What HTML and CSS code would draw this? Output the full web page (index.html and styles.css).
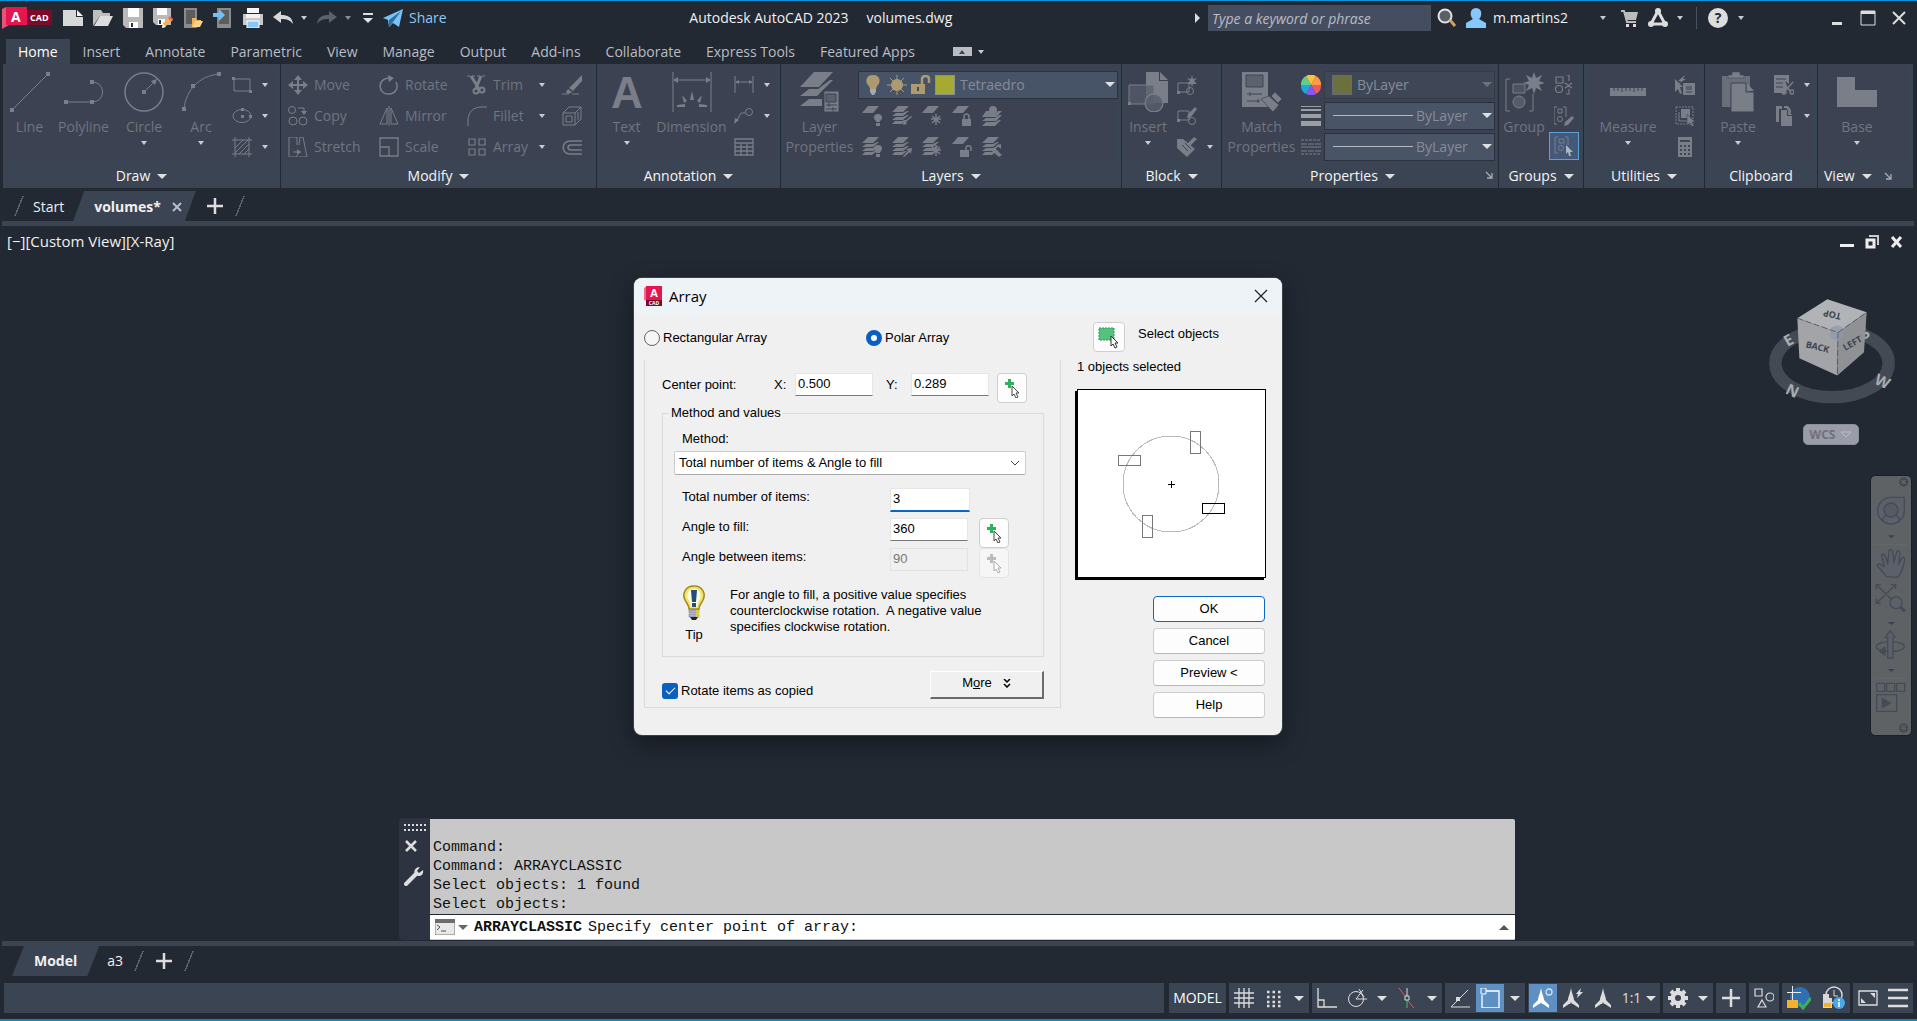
FILE: index.html
```html
<!DOCTYPE html>
<html lang="en">
<head>
<meta charset="utf-8">
<title>Autodesk AutoCAD 2023 - volumes.dwg</title>
<link rel="stylesheet" href="styles.css">
</head>
<body>
<svg class="sprite" aria-hidden="true">
  <!-- quick access -->
  <symbol id="new" viewBox="0 0 20 20"><path d="M0 2h13v7h7v9H0z" fill="#d8d8d8"/><path d="M14 2l6 6h-6z" fill="#f4f4f4"/></symbol>
  <symbol id="open" viewBox="0 0 20 20"><path d="M0 18V2h8l2 3h7v3H7z" fill="#bdbdbd"/><path d="M1 18L7 8h13l-5 10z" fill="#dcdcdc"/></symbol>
  <symbol id="save" viewBox="0 0 20 20"><path d="M0 0h20v20H3l-3-3z" fill="#b9b9b9"/><path d="M5 0h11v9H5zM6 14h9v6H6z" fill="#fff"/><path d="M8 15h2v4H8z" fill="#333"/></symbol>
  <symbol id="saveas" viewBox="0 0 20 20"><path d="M0 0h18v17H3l-3-3z" fill="#b9b9b9"/><path d="M4 0h10v7H4zM5 11h7v6H5z" fill="#fff"/><path d="M6 12h2v4H6z" fill="#333"/><path d="M9 20l1-5 7-6 3 3-7 6z" fill="#f1b355"/><path d="M15 10l2-2 3 3-2 2z" fill="#f4655a"/><path d="M9 20l1-4 3 3z" fill="#fff"/></symbol>
  <symbol id="openweb" viewBox="0 0 20 20"><path d="M1 0h13v20H1z" fill="#8b8b8b"/><path d="M3 2h9v14H3z" fill="#5d5d5d"/><path d="M9 19v-9h4l1 2h4v2h-5z" fill="#f1b355"/><path d="M9 19l3-6h8l-3 6z" fill="#fbd38a"/></symbol>
  <symbol id="saveweb" viewBox="0 0 20 20"><path d="M4 0h14v20H4z" fill="#8b8b8b"/><path d="M6 2h10v14H6z" fill="#5d5d5d"/><path d="M0 5h6V1l6 6-6 6V9H0z" fill="#6fc0fb"/></symbol>
  <symbol id="print" viewBox="0 0 20 20"><path d="M4 0h12v5H4z" fill="#f5f5f5"/><path d="M0 6h20v11H0z" fill="#c9c9c9"/><path d="M3 6h14v4H3z" fill="#f2f2f2"/><path d="M4 13h12v7H4z" fill="#86c8fb" stroke="#fff"/></symbol>
  <symbol id="undo" viewBox="0 0 20 20"><path d="M0 9l8-6v4c7 0 11 2 12 9-3-4-6-5-12-5v4z" fill="currentColor"/></symbol>
  <symbol id="redo" viewBox="0 0 20 20"><path d="M20 9l-8-6v4C5 7 1 9 0 16c3-4 6-5 12-5v4z" fill="currentColor"/></symbol>
  <symbol id="plane" viewBox="0 0 20 20"><path d="M0 10L20 1l-4 18-6-4-4 4-1-7z" fill="#79c3f6"/><path d="M6 12L18 3l-8 11-4 5z" fill="#2c6fa3"/></symbol>
  <symbol id="search" viewBox="0 0 20 20"><circle cx="8" cy="8" r="6.500" fill="#5b6068" stroke="#e3e3e3" stroke-width="2"/><path d="M13 12l5 6" stroke="#cfa063" stroke-width="3"/></symbol>
  <symbol id="user" viewBox="0 0 20 20"><path d="M10 0c7 0 6 9 3 11l7 4v5H0v-5l7-4C4 9 3 0 10 0z" fill="#86c8fb"/></symbol>
  <symbol id="cart" viewBox="0 0 20 20"><path d="M1 3h3l3 11h9" fill="none" stroke="#bbb" stroke-width="2"/><path d="M4 4h14l-2 8H6z" fill="#bbb"/><path d="M6 16h3v3H6zM13 16h3v3h-3z" fill="#ddd"/></symbol>
  <symbol id="tri" viewBox="0 0 20 20"><path d="M10 3L3 16h14z" fill="none" stroke="#ddd" stroke-width="3"/><circle cx="10" cy="3" r="3" fill="#ddd"/><circle cx="3" cy="16" r="3" fill="#ddd"/><circle cx="17" cy="16" r="3" fill="#ddd"/></symbol>
  <!-- draw -->
  <symbol id="line" viewBox="0 0 40 40"><path d="M2 38L38 2" stroke="currentColor"/><path d="M0 36h4v4H0zM36 0h4v4h-4z" fill="currentColor"/></symbol>
  <symbol id="poly" viewBox="0 0 40 40"><path d="M2 30h26c14 0 14-20 0-20" fill="none" stroke="currentColor"/><path d="M0 28h4v4H0zM26 28h4v4h-4zM26 8h4v4h-4z" fill="currentColor"/></symbol>
  <symbol id="circle" viewBox="0 0 40 40"><circle cx="20" cy="20" r="19" fill="none" stroke="currentColor" stroke-width="1.500"/><path d="M20 20L31 9" stroke="currentColor"/><path d="M18 18h4v4h-4zM33 7l-2 6-4-4z" fill="currentColor"/></symbol>
  <symbol id="arc" viewBox="0 0 40 40"><path d="M3 37C5 18 18 4 38 2" fill="none" stroke="currentColor"/><path d="M1 35h4v4H1zM10 12h4v4h-4zM36 0h4v4h-4z" fill="currentColor"/></symbol>
  <symbol id="rect" viewBox="0 0 20 20"><path d="M2 4h16v12H2z" fill="none" stroke="currentColor"/><path d="M0 2h3v3H0zM17 15h3v3h-3z" fill="currentColor"/></symbol>
  <symbol id="ell" viewBox="0 0 20 20"><ellipse cx="10" cy="10" rx="9" ry="6.500" fill="none" stroke="currentColor"/><path d="M9 9h3v3H9zM9 2h3v3H9zM17 9h3v3h-3z" fill="currentColor"/></symbol>
  <symbol id="hatch" viewBox="0 0 20 20"><path d="M3 0v20M17 0v20M0 3h20M0 17h20M3 11l8-8M3 16L16 3M7 17L17 7M12 17l5-5" stroke="currentColor" fill="none"/></symbol>
  <!-- modify -->
  <symbol id="move" viewBox="0 0 20 20"><path d="M10 2v16M2 10h16" stroke="currentColor" stroke-width="2"/><path d="M10 0l4 5H6zM10 20l4-5H6zM0 10l5-4v8zM20 10l-5-4v8z" fill="currentColor"/></symbol>
  <symbol id="copy" viewBox="0 0 20 20"><g fill="none" stroke="currentColor"><circle cx="4" cy="4" r="3.500"/><circle cx="5" cy="15" r="4"/><circle cx="15" cy="15" r="4"/><path d="M10 2h6v5"/></g><path d="M13 5h6l-3 4z" fill="currentColor"/></symbol>
  <symbol id="stretch" viewBox="0 0 20 20"><path d="M9 8V0H1v20h8v-2M11 8l1-8h3l4 20h-8M5 15h8" fill="none" stroke="currentColor"/><path d="M9 12l4 3-4 3z" fill="currentColor"/></symbol>
  <symbol id="rotate" viewBox="0 0 20 20"><path d="M11 3C-3 3-1 20 10 19c6 0 10-6 7-12" fill="none" stroke="currentColor" stroke-width="1.500"/><path d="M9 0l6 3-5 4z" fill="currentColor"/></symbol>
  <symbol id="mirror" viewBox="0 0 20 20"><path d="M8 2v16H1zM12 2v16h7zM10 0v20" fill="none" stroke="currentColor"/></symbol>
  <symbol id="scale" viewBox="0 0 20 20"><path d="M1 1h18v18H1zM1 10h9v9" fill="none" stroke="currentColor" stroke-width="1.300"/></symbol>
  <symbol id="trim" viewBox="0 0 20 20"><path d="M0 1h20" stroke="currentColor" stroke-dasharray="3 2"/><path d="M4 1l8 13M14 1L9 13" stroke="currentColor" stroke-width="3"/><circle cx="9" cy="16" r="2.500" fill="none" stroke="currentColor" stroke-width="2"/><circle cx="15" cy="15" r="2.500" fill="none" stroke="currentColor" stroke-width="2"/></symbol>
  <symbol id="fillet" viewBox="0 0 20 20"><path d="M1 20v-5C1 6 6 1 15 1h5" fill="none" stroke="currentColor"/></symbol>
  <symbol id="array" viewBox="0 0 20 20"><path d="M2 2h6v6H2zM12 2h6v6h-6zM2 12h6v6H2zM12 12h6v6h-6z" fill="none" stroke="currentColor" stroke-width="1.200"/></symbol>
  <symbol id="erase" viewBox="0 0 20 20"><path d="M20 0v6l-9 10-4-3zM6 14l4 3c-2 2-5 2-6 0z" fill="currentColor"/><path d="M0 19h20" stroke="currentColor" stroke-dasharray="7 3"/></symbol>
  <symbol id="box" viewBox="0 0 20 20"><path d="M1 7h12v12H1zM1 7l6-6h12v12l-6 6M13 7l6-6M4 10h6v6H4zM16 6v8" fill="none" stroke="currentColor"/></symbol>
  <symbol id="offset" viewBox="0 0 20 20"><path d="M20 4H8c-9 0-9 13 0 13h12M20 8H9c-4 0-4 5 0 5h11" fill="none" stroke="currentColor" stroke-width="1.500"/></symbol>
  <!-- annotation -->
  <symbol id="dim" viewBox="0 0 40 40"><path d="M1 0v40M39 0v40M2 8h36" stroke="currentColor"/><path d="M1 8l5-3v6zM39 8l-5-3v6zM20 19l2 9h-4zM10 23l5 6-3 2zM30 23l-5 6 3 2zM5 33l8-1v3H5zM35 33l-8-1v3h8z" fill="currentColor"/></symbol>
  <symbol id="dimlin" viewBox="0 0 20 20"><path d="M1 1v17M19 1v17M2 7h16" stroke="currentColor"/><path d="M1 7l4-2v4zM19 7l-4-2v4z" fill="currentColor"/></symbol>
  <symbol id="leader" viewBox="0 0 20 20"><path d="M2 16l5-9h4" fill="none" stroke="currentColor"/><circle cx="15" cy="6" r="3.500" fill="none" stroke="currentColor"/><path d="M0 18l1-6 4 2z" fill="currentColor"/></symbol>
  <symbol id="table" viewBox="0 0 20 20"><path d="M1 2h18v16H1zM1 6h18M1 10h18M1 14h18M7 6v12M13 6v12" fill="none" stroke="currentColor" stroke-width="1.300"/></symbol>
  <!-- layers -->
  <symbol id="layerprops" viewBox="0 0 40 40"><path d="M14 0h19L19 15H0zM9 17l-9 7h17l16-16-3 0-12 9zM9 27l-9 7h22v-7z" fill="currentColor"/><path d="M24 19h15v21H24z" fill="currentColor" stroke="#3b4252"/><path d="M26 22h10v8H26zM26 33h11M26 37h11M29 31v4M33 35v4" fill="#5a606c" stroke="#3b4252"/></symbol>
  <symbol id="sheet" viewBox="0 0 20 20"><path d="M6 0h11l-6 7H0z" fill="currentColor"/></symbol>
  <symbol id="stack" viewBox="0 0 20 20"><path d="M6 0h11l-6 6H0zM4 7l-4 3h11l6-5-2 0-4 2zM4 11l-4 3h11l6-5h-2l-4 2zM3 15l-3 3h10l5-4h-2l-3 1z" fill="currentColor"/></symbol>
  <symbol id="badge-bulb" viewBox="0 0 20 20"><path d="M16 8c5 0 5 5 2 7v1h-4v-1c-3-2-3-7 2-7zM14 17h4v3h-4z" fill="currentColor"/></symbol>
  <symbol id="badge-in" viewBox="0 0 20 20"><path d="M11 19l1-5 1 1 6-5 1 1-6 5 1 2z" fill="currentColor"/></symbol>
  <symbol id="badge-out" viewBox="0 0 20 20"><path d="M20 11l-1 6-1-2-6 5-1-1 5-5-2-2z" fill="currentColor"/></symbol>
  <symbol id="badge-star" viewBox="0 0 20 20"><path d="M14 8v11M9 13h10M10 10l8 7M18 10l-8 7" stroke="currentColor" stroke-width="1.500"/></symbol>
  <symbol id="badge-lock" viewBox="0 0 20 20"><path d="M10 13h9v7h-9z" fill="currentColor"/><path d="M12 13v-2c0-4 5-4 5 0v2" fill="none" stroke="currentColor" stroke-width="1.500"/></symbol>
  <symbol id="badge-unlock" viewBox="0 0 20 20"><path d="M8 13h9v7H8z" fill="currentColor"/><path d="M14 13v-2c0-3 5-3 5 0v3" fill="none" stroke="currentColor" stroke-width="1.500"/></symbol>
  <symbol id="badge-pen" viewBox="0 0 20 20"><path d="M9 11l4 0 7 7-3 2-7-6zM14 8l5-1v5z" fill="currentColor"/></symbol>
  <symbol id="current" viewBox="0 0 20 20"><circle cx="11" cy="4" r="4" fill="currentColor"/><path d="M4 5h3c2 4 6 4 9 0h4l-6 6H0zM4 12l-4 3h14l6-6h-3l-4 3zM4 16l-4 4h13l6-6h-2l-4 2z" fill="currentColor"/></symbol>
  <symbol id="bulb" viewBox="0 0 20 20"><path d="M10 0c8 0 8 8 4 11l-1 3H7l-1-3C2 8 2 0 10 0z" fill="#ad9a70"/><path d="M7 14h6v3l-2 3H9l-2-3z" fill="#a5a9b1"/></symbol>
  <symbol id="sun" viewBox="0 0 20 20"><circle cx="10" cy="10" r="6" fill="#ad9a70"/><path d="M10 0v20M0 10h20M3 3l14 14M17 3L3 17" stroke="#ad9a70"/></symbol>
  <symbol id="lock" viewBox="0 0 20 20"><path d="M0 9h14v10H0z" fill="#ad9a70"/><path d="M11 9V4c0-4 7-4 7 0v4" fill="none" stroke="#ad9a70" stroke-width="2.500"/><path d="M7 12v4" stroke="#4b4a43" stroke-width="2"/></symbol>
  <!-- block -->
  <symbol id="insert" viewBox="0 0 40 40"><path d="M18 0h13v9h9v22H18z" fill="currentColor"/><path d="M32 0l8 8h-8z" fill="currentColor"/><path d="M1 13h25v19H1z" fill="#575e6b" fill-opacity=".7" stroke="currentColor"/><circle cx="26" cy="31" r="9" fill="#575e6b" fill-opacity=".8" stroke="currentColor" stroke-width="1.300"/><path d="M0 30h3v3H0z" fill="currentColor"/></symbol>
  <symbol id="blocknew" viewBox="0 0 20 20"><path d="M1 8h11v9H1z" fill="none" stroke="currentColor"/><circle cx="13" cy="16" r="3.500" fill="none" stroke="currentColor"/><path d="M0 16h3v3H0zM15 0l1 4 4-1-3 3 3 3-4 0-1 3-1-3-4 0 3-3-3-3 4 1z" fill="currentColor"/></symbol>
  <symbol id="blockedit" viewBox="0 0 20 20"><path d="M1 5h11v9H1z" fill="none" stroke="currentColor"/><circle cx="15" cy="15" r="3.500" fill="none" stroke="currentColor"/><path d="M0 13h3v3H0zM10 12l1-4 7-7 2 2-6 8z" fill="currentColor"/></symbol>
  <symbol id="attr" viewBox="0 0 20 20"><path d="M0 2h6l12 10-8 8L0 11zM9 8l8-8 3 2-8 8z" fill="currentColor"/><path d="M5 8l6 6M8 6l6 6" stroke="#3b4252"/></symbol>
  <!-- properties -->
  <symbol id="match" viewBox="0 0 40 40"><path d="M0 0h26v35H0z" fill="currentColor"/><path d="M4 3h17v12H4zM5 22h15M5 29h13M8 20v4M16 27v4" fill="#5c636f" stroke="#3f4655"/><path d="M19 27l8-3 10 9-6 7zM29 24l4-4 7 7-4 4z" fill="currentColor" stroke="#3b4252" stroke-width=".7"/></symbol>
  <symbol id="wheel" viewBox="0 0 20 20"><path d="M10 10L5 1a10 10 0 0 1 10 0z" fill="#ffc23c"/><path d="M10 10L15 1a10 10 0 0 1 5 9z" fill="#ff9a45"/><path d="M10 10h10a10 10 0 0 1-5 9z" fill="#ec5a5f"/><path d="M10 10l5 9a10 10 0 0 1-10 0z" fill="#8b55f5"/><path d="M10 10L5 19a10 10 0 0 1-5-9z" fill="#1fa9d6"/><path d="M10 10H0a10 10 0 0 1 5-9z" fill="#5fd08c"/></symbol>
  <symbol id="lweight" viewBox="0 0 20 20"><path d="M0 0h20v1H0zM0 3h20v2H0zM0 8h20v4H0zM0 15h20v5H0z" fill="#9a9ea5"/></symbol>
  <symbol id="ltype" viewBox="0 0 20 20"><path d="M0 3h20M0 17h20" stroke="currentColor" stroke-dasharray="3 1"/><path d="M0 7h20M0 14h20" stroke="currentColor" stroke-dasharray="6 1"/><path d="M0 10h20" stroke="currentColor"/></symbol>
  <symbol id="launch" viewBox="0 0 8 8"><path d="M1 1l5 5M7 2v5H2" fill="none" stroke="#a9adb5" stroke-width="1.300"/></symbol>
  <!-- groups -->
  <symbol id="group" viewBox="0 0 40 40"><path d="M6 7H2v32h4M25 39h4V22" fill="none" stroke="currentColor"/><path d="M9 12h12v9H9z" fill="#4c5361" stroke="currentColor"/><circle cx="15" cy="30" r="6" fill="#565d6a" stroke="currentColor"/><path d="M30 0l2 6 6-3-3 6 6 2-6 2 3 6-6-3-2 6-2-6-6 3 3-6-6-2 6-2-3-6 6 3z" fill="currentColor"/></symbol>
  <symbol id="ungroup" viewBox="0 0 20 20"><path d="M2 2h7v6H2zM12 0h3v6M12 19h3v-5M11 8l7 5M18 8l-7 5" fill="none" stroke="currentColor" stroke-width="1.200"/><circle cx="5" cy="14" r="3.500" fill="none" stroke="currentColor" stroke-width="1.200"/></symbol>
  <symbol id="grpedit" viewBox="0 0 20 20"><path d="M3 1H0v17h3M9 1h3v10M4 3h4v4H4z" fill="none" stroke="currentColor"/><circle cx="6" cy="13" r="2.500" fill="none" stroke="currentColor"/><path d="M10 20l1-4 7-6 2 2-6 7z" fill="currentColor"/></symbol>
  <symbol id="grpsel" viewBox="0 0 20 20"><path d="M4 1H1v16h3M11 1h3v8M5 3h5v4H5z" fill="none" stroke="currentColor"/><circle cx="7" cy="12" r="2.500" fill="none" stroke="currentColor"/><path d="M12 9l7 7h-3l1 4h-2l-1-4-2 2z" fill="#aeb6c0"/></symbol>
  <!-- utilities, clipboard, view -->
  <symbol id="measure" viewBox="0 0 40 40"><path d="M2 16h36v8H2z" fill="currentColor"/><path d="M6 16v3M10 16v3M14 16v4M18 16v3M22 16v3M26 16v4M30 16v3M34 16v3" stroke="#3b4252"/></symbol>
  <symbol id="qsel" viewBox="0 0 20 20"><path d="M8 8h12v12H8z" fill="currentColor"/><path d="M0 4l8 8H5l2 6-2 1-2-5-3 3zM10 0L3 6h3L3 9l8-5H8z" fill="currentColor"/><path d="M11 12h6M11 14h6M11 17h6" stroke="#3b4252"/></symbol>
  <symbol id="selall" viewBox="0 0 20 20"><path d="M1 1h17v17H1z" fill="none" stroke="currentColor" stroke-dasharray="2 1"/><path d="M6 3h9v9H6z" fill="currentColor"/><path d="M4 6v9h9" fill="none" stroke="currentColor"/><path d="M12 8l8 8h-3l2 4-2 1-2-4-3 2z" fill="currentColor" stroke="#3b4252" stroke-width=".5"/></symbol>
  <symbol id="calc" viewBox="0 0 20 20"><path d="M3 0h14v20H3z" fill="currentColor"/><path d="M5 3h10v2H5zM5 8h2v2H5zM9 8h2v2H9zM13 8h2v2h-2zM5 12h2v2H5zM9 12h2v2H9zM13 12h2v2h-2zM5 16h2v2H5zM9 16h2v2H9zM13 16h2v2h-2z" fill="#3f4654"/></symbol>
  <symbol id="paste" viewBox="0 0 40 40"><path d="M4 4h28v31H4z" fill="currentColor" opacity=".75"/><path d="M14 0h8v3h4v3H10V3h4z" fill="currentColor" stroke="#3b4252" stroke-width=".5"/><path d="M13 11h15v9h8v20H13z" fill="currentColor" stroke="#3b4252"/><path d="M29 11l7 8h-7z" fill="currentColor"/></symbol>
  <symbol id="cut" viewBox="0 0 20 20"><path d="M0 0h15v9l-4-3 2 5-2 7H0z" fill="currentColor"/><path d="M2 4h10M2 8h7M2 12h7" stroke="#3b4252"/><path d="M9 7l7 9M19 7l-8 9" stroke="currentColor" stroke-width="1.500"/><circle cx="10" cy="17" r="2" fill="none" stroke="currentColor" stroke-width="1.500"/><circle cx="18" cy="17" r="2" fill="none" stroke="currentColor" stroke-width="1.500"/></symbol>
  <symbol id="clip" viewBox="0 0 20 20"><path d="M2 0h6v3H5v13H2z" fill="currentColor"/><path d="M7 4h6v6h5v10H7z" fill="currentColor"/><path d="M10 0h4l3 4v3l-5-5h-2zM14 4l4 5h-4z" fill="currentColor"/></symbol>
  <symbol id="base" viewBox="0 0 40 40"><path d="M0 5h18v13h22v17H0z" fill="currentColor"/></symbol>
  <!-- dialog -->
  <symbol id="pick" viewBox="0 0 20 20"><path d="M6 1h3v3h3v3H9v3H6V7H3V4h3z" fill="var(--plus,#2cb35a)"/><path d="M10 8v10l2-2 2 4 2-1-2-4h3z" fill="#fff" stroke="var(--cur,#444)"/></symbol>
  <!-- status -->
  <symbol id="s-grid" viewBox="0 0 20 20"><path d="M5 0v20M10 0v20M15 0v20M0 5h20M0 10h20M0 15h20" stroke="currentColor" stroke-width="1.300"/></symbol>
  <symbol id="s-dots" viewBox="0 0 20 20"><path d="M3 4h14M3 9h14M3 14h14M3 18h14" stroke="currentColor" stroke-width="2.500" stroke-dasharray="2.500 3"/></symbol>
  <symbol id="s-ortho" viewBox="0 0 20 20"><path d="M1 0v19h19M1 12h6v7" fill="none" stroke="currentColor" stroke-width="1.300"/></symbol>
  <symbol id="s-polar" viewBox="0 0 20 20"><circle cx="9" cy="11" r="7.500" fill="none" stroke="currentColor"/><path d="M9 11h11M9 11l7-9M12 1l5 8" stroke="currentColor" fill="none"/></symbol>
  <symbol id="s-iso" viewBox="0 0 20 20"><path d="M2 0l6 8M11 13l6 7" stroke="#e0565b"/><path d="M10 0v8" stroke="#ddd"/><path d="M10 12v8" stroke="#43c06a"/><path d="M8 8h4v4H8z" fill="none" stroke="#ddd"/></symbol>
  <symbol id="s-angle" viewBox="0 0 20 20"><path d="M20 19H1L18 2" fill="none" stroke="currentColor"/><path d="M6 9h4v4H6z" fill="currentColor"/></symbol>
  <symbol id="s-osnap" viewBox="0 0 20 20"><path d="M6 3h13v17H2V7" fill="none" stroke="currentColor" stroke-width="1.300"/><path d="M1 0h5v6H1z" fill="none" stroke="currentColor"/></symbol>
  <symbol id="s-ann" viewBox="0 0 20 20"><path d="M10 0c1 6 3 9 3 12l5 5v3l-6-4h-1l-1-2-1 2H8l-6 4v-3l5-5c0-3 2-6 3-12z" fill="currentColor"/></symbol>
  <symbol id="s-gear" viewBox="0 0 20 20"><path d="M10 0v20M0 10h20M3 3l14 14M17 3L3 17" stroke="currentColor" stroke-width="4"/><circle cx="10" cy="10" r="5.500" fill="none" stroke="currentColor" stroke-width="4"/><circle cx="10" cy="10" r="3" fill="#3b4453"/></symbol>
  <symbol id="s-plus" viewBox="0 0 20 20"><path d="M10 1v18M1 10h18" stroke="currentColor" stroke-width="2.500"/></symbol>
  <symbol id="s-iso2" viewBox="0 0 20 20"><path d="M1 1h7v7H1zM8 12l4 7H4z" fill="none" stroke="currentColor" stroke-width="1.200"/><circle cx="16" cy="9" r="4" fill="none" stroke="currentColor" stroke-width="1.200"/></symbol>
  <symbol id="s-globe" viewBox="0 0 24 24"><circle cx="13" cy="11" r="10" fill="#2f6fb5"/><path d="M0 6h14v1H0zM5 0h1v14H5z" fill="#e8eef5"/><path d="M0 14h11v8H0z" fill="#f3b229"/><path d="M12 17l4 5 8-10" fill="none" stroke="#3fae5a" stroke-width="3"/></symbol>
  <symbol id="s-hist" viewBox="0 0 24 24"><circle cx="13" cy="9" r="8" fill="none" stroke="#d8d8d8" stroke-width="1.500"/><path d="M13 4v6h4" stroke="#d8d8d8" fill="none"/><path d="M2 8h6v4H2zM2 12h9v10H2z" fill="#d8d8d8"/><path d="M3 17h7v4H3z" fill="#f3b229"/><circle cx="18" cy="17" r="6" fill="#4aa8e8"/><path d="M18 13v2M18 16v5" stroke="#fff" stroke-width="1.500"/></symbol>
  <symbol id="s-full" viewBox="0 0 20 20"><path d="M1 3h18v14H1z" fill="none" stroke="currentColor" stroke-width="1.300"/><path d="M12 5h5v5zM3 10l5 5H3z" fill="currentColor"/></symbol>
  <symbol id="s-menu" viewBox="0 0 20 20"><path d="M0 2h20M0 10h20M0 18h20" stroke="currentColor" stroke-width="2.500"/></symbol>
</svg>

<header class="titlebar">
  <div class="quick">
    <svg class="logo" viewBox="0 0 50 22" role="img" aria-label="AutoCAD"><path d="M0 2l4-2h3v18l-7 4z" fill="#e5557a"/><path d="M4 0h21v18H4z" fill="#e31650"/><path d="M25 3h25v15H25z" fill="#7c0a2a"/><text x="9" y="15" class="logo-a">A</text><text x="28" y="14" class="logo-cad">CAD</text></svg>
    <button title="New"><svg class="i20"><use href="#new"/></svg></button>
    <button title="Open"><svg class="i20"><use href="#open"/></svg></button>
    <button title="Save"><svg class="i20"><use href="#save"/></svg></button>
    <button title="Save As"><svg class="i20"><use href="#saveas"/></svg></button>
    <button title="Open from Web"><svg class="i20"><use href="#openweb"/></svg></button>
    <button title="Save to Web"><svg class="i20"><use href="#saveweb"/></svg></button>
    <button title="Plot"><svg class="i20"><use href="#print"/></svg></button>
    <button class="lit" title="Undo"><svg class="i20"><use href="#undo"/></svg></button>
    <button class="drop" title="Undo list"><i class="dn"></i></button>
    <button class="dim" title="Redo"><svg class="i20"><use href="#redo"/></svg></button>
    <button class="drop dim" title="Redo list"><i class="dn"></i></button>
    <button class="more-qa" title="Customize"><i class="dn wide"></i></button>
    <button class="share"><svg class="i20"><use href="#plane"/></svg>Share</button>
  </div>
  <h1><span>Autodesk AutoCAD 2023</span><span>volumes.dwg</span></h1>
  <div class="account">
    <i class="rt"></i>
    <input type="text" class="find" placeholder="Type a keyword or phrase" aria-label="Search">
    <button title="Search"><svg class="i20"><use href="#search"/></svg></button>
    <button class="who"><svg class="i20"><use href="#user"/></svg><span>m.martins2</span><i class="dn"></i></button>
    <button title="App store"><svg class="i20"><use href="#cart"/></svg></button>
    <button class="app" title="Autodesk app"><svg class="i20"><use href="#tri"/></svg><i class="dn"></i></button>
    <button class="help" title="Help"><b>?</b><i class="dn"></i></button>
    <button class="win" title="Minimize"><svg class="i14" viewBox="0 0 14 14"><path d="M2 11h10v3H2z" fill="#ddd"/></svg></button>
    <button class="win" title="Maximize"><svg class="i14" viewBox="0 0 14 14"><path d="M0 0h14v14H0z" fill="none" stroke="#ddd"/><path d="M0 0h14v3H0z" fill="#ddd"/></svg></button>
    <button class="win" title="Close"><svg class="i14" viewBox="0 0 14 14"><path d="M1 1l12 12M13 1L1 13" stroke="#ddd" stroke-width="2"/></svg></button>
  </div>
</header>

<nav class="tabs" aria-label="Ribbon tabs">
  <a href="#home" class="on">Home</a><a href="#insert-tab">Insert</a><a href="#annotate">Annotate</a><a href="#parametric">Parametric</a><a href="#view">View</a><a href="#manage">Manage</a><a href="#output">Output</a><a href="#addins">Add-ins</a><a href="#collaborate">Collaborate</a><a href="#express">Express Tools</a><a href="#featured">Featured Apps</a>
  <button class="minrib" title="Minimize ribbon"><span><i class="up"></i></span><i class="dn"></i></button>
</nav>

<main class="ribbon" id="home">
  <section class="panel">
    <div class="tools draw">
      <button class="big"><svg class="i40"><use href="#line"/></svg>Line</button>
      <button class="big"><svg class="i40"><use href="#poly"/></svg>Polyline</button>
      <button class="big"><svg class="i40"><use href="#circle"/></svg>Circle<i class="dn"></i></button>
      <button class="big"><svg class="i40"><use href="#arc"/></svg>Arc<i class="dn"></i></button>
      <div class="col">
        <button title="Rectangle"><svg class="i20"><use href="#rect"/></svg><i class="dn"></i></button>
        <button title="Ellipse"><svg class="i20"><use href="#ell"/></svg><i class="dn"></i></button>
        <button title="Hatch"><svg class="i20"><use href="#hatch"/></svg><i class="dn"></i></button>
      </div>
    </div>
    <h2>Draw <i class="dn wide"></i></h2>
  </section>
  <section class="panel">
    <div class="tools modify">
      <div class="col">
        <button><svg class="i20"><use href="#move"/></svg>Move</button>
        <button><svg class="i20"><use href="#copy"/></svg>Copy</button>
        <button><svg class="i20"><use href="#stretch"/></svg>Stretch</button>
      </div>
      <div class="col">
        <button><svg class="i20"><use href="#rotate"/></svg>Rotate</button>
        <button><svg class="i20"><use href="#mirror"/></svg>Mirror</button>
        <button><svg class="i20"><use href="#scale"/></svg>Scale</button>
      </div>
      <div class="col lists">
        <button><svg class="i20"><use href="#trim"/></svg><span>Trim</span><i class="dn"></i></button>
        <button><svg class="i20"><use href="#fillet"/></svg><span>Fillet</span><i class="dn"></i></button>
        <button><svg class="i20"><use href="#array"/></svg><span>Array</span><i class="dn"></i></button>
      </div>
      <div class="col">
        <button title="Erase"><svg class="i20"><use href="#erase"/></svg></button>
        <button title="Explode"><svg class="i20"><use href="#box"/></svg></button>
        <button title="Offset"><svg class="i20"><use href="#offset"/></svg></button>
      </div>
    </div>
    <h2>Modify <i class="dn wide"></i></h2>
  </section>
  <section class="panel">
    <div class="tools annot">
      <button class="big"><svg class="i40 open" viewBox="0 0 40 40"><text x="20" y="36" text-anchor="middle" class="glyph-a">A</text></svg>Text<i class="dn"></i></button>
      <button class="big"><svg class="i40"><use href="#dim"/></svg>Dimension</button>
      <div class="col">
        <button title="Linear"><svg class="i20"><use href="#dimlin"/></svg><i class="dn"></i></button>
        <button title="Leader"><svg class="i20"><use href="#leader"/></svg><i class="dn"></i></button>
        <button title="Table"><svg class="i20"><use href="#table"/></svg></button>
      </div>
    </div>
    <h2>Annotation <i class="dn wide"></i></h2>
  </section>
  <section class="panel">
    <div class="tools layers">
      <button class="big"><svg class="i40"><use href="#layerprops"/></svg>Layer<br>Properties</button>
      <div class="rows">
        <div class="combo"><svg class="i20"><use href="#bulb"/></svg><svg class="i20"><use href="#sun"/></svg><svg class="i20"><use href="#lock"/></svg><i class="swatch"></i><select aria-label="Layer"><option>Tetraedro</option></select><i class="dn wide"></i></div>
        <div class="strip">
          <button title="Off"><svg class="i20"><use href="#sheet"/><use href="#badge-bulb"/></svg></button>
          <button title="Isolate"><svg class="i20"><use href="#stack"/><use href="#badge-in"/></svg></button>
          <button title="Freeze"><svg class="i20"><use href="#sheet"/><use href="#badge-star"/></svg></button>
          <button title="Lock"><svg class="i20"><use href="#sheet"/><use href="#badge-lock"/></svg></button>
          <button title="Make Current"><svg class="i20"><use href="#current"/></svg></button>
        </div>
        <div class="strip">
          <button title="Turn All On"><svg class="i20"><use href="#stack"/><use href="#badge-bulb"/></svg></button>
          <button title="Unisolate"><svg class="i20"><use href="#stack"/><use href="#badge-out"/></svg></button>
          <button title="Thaw All"><svg class="i20"><use href="#stack"/><use href="#badge-star"/></svg></button>
          <button title="Unlock"><svg class="i20"><use href="#sheet"/><use href="#badge-unlock"/></svg></button>
          <button title="Match Layer"><svg class="i20"><use href="#stack"/><use href="#badge-pen"/></svg></button>
        </div>
      </div>
    </div>
    <h2>Layers <i class="dn wide"></i></h2>
  </section>
  <section class="panel">
    <div class="tools block">
      <button class="big"><svg class="i40"><use href="#insert"/></svg>Insert<i class="dn"></i></button>
      <div class="col">
        <button title="Create"><svg class="i20"><use href="#blocknew"/></svg></button>
        <button title="Edit"><svg class="i20"><use href="#blockedit"/></svg></button>
        <button title="Edit Attributes"><svg class="i20"><use href="#attr"/></svg><i class="dn"></i></button>
      </div>
    </div>
    <h2>Block <i class="dn wide"></i></h2>
  </section>
  <section class="panel">
    <div class="tools props">
      <button class="big"><svg class="i40"><use href="#match"/></svg>Match<br>Properties</button>
      <div class="rows">
        <div class="prop"><svg class="i20"><use href="#wheel"/></svg><div class="combo flat"><i class="swatch dull"></i><select aria-label="Color"><option>ByLayer</option></select><i class="dn wide"></i></div></div>
        <div class="prop"><svg class="i20"><use href="#lweight"/></svg><div class="combo"><i class="rule"></i><select aria-label="Lineweight"><option>ByLayer</option></select><i class="dn wide"></i></div></div>
        <div class="prop"><svg class="i20"><use href="#ltype"/></svg><div class="combo"><i class="rule"></i><select aria-label="Linetype"><option>ByLayer</option></select><i class="dn wide"></i></div></div>
      </div>
    </div>
    <h2 class="with-launch">Properties <i class="dn wide"></i><svg class="launch end"><use href="#launch"/></svg></h2>
  </section>
  <section class="panel">
    <div class="tools groups">
      <button class="big"><svg class="i40"><use href="#group"/></svg>Group</button>
      <div class="col">
        <button title="Ungroup"><svg class="i20"><use href="#ungroup"/></svg></button>
        <button title="Group Edit"><svg class="i20"><use href="#grpedit"/></svg></button>
        <button class="picked" title="Group Selection"><svg class="i20"><use href="#grpsel"/></svg></button>
      </div>
    </div>
    <h2>Groups <i class="dn wide"></i></h2>
  </section>
  <section class="panel">
    <div class="tools utils">
      <button class="big"><svg class="i40"><use href="#measure"/></svg>Measure<i class="dn"></i></button>
      <div class="col">
        <button title="Quick Select"><svg class="i20"><use href="#qsel"/></svg></button>
        <button title="Select All"><svg class="i20"><use href="#selall"/></svg></button>
        <button title="Calculator"><svg class="i20"><use href="#calc"/></svg></button>
      </div>
    </div>
    <h2>Utilities <i class="dn wide"></i></h2>
  </section>
  <section class="panel">
    <div class="tools clipb">
      <button class="big"><svg class="i40"><use href="#paste"/></svg>Paste<i class="dn"></i></button>
      <div class="col">
        <button title="Cut"><svg class="i20"><use href="#cut"/></svg><i class="dn"></i></button>
        <button title="Copy"><svg class="i20"><use href="#clip"/></svg><i class="dn"></i></button>
      </div>
    </div>
    <h2>Clipboard</h2>
  </section>
  <section class="panel">
    <div class="tools viewp">
      <button class="big"><svg class="i40"><use href="#base"/></svg>Base<i class="dn"></i></button>
    </div>
    <h2 class="start">View <i class="dn wide"></i><svg class="launch"><use href="#launch"/></svg></h2>
  </section>
</main>

<nav class="files" aria-label="Open drawings">
  <i class="slash"></i><a href="#start">Start</a>
  <a href="#volumes" class="cur"><b>volumes*</b><svg class="i10" viewBox="0 0 10 10"><path d="M1 1l8 8M9 1L1 9" stroke="#b8bdc6" stroke-width="2"/></svg></a>
  <button title="New drawing"><svg class="i16" viewBox="0 0 16 16"><path d="M8 0v16M0 8h16" stroke="#ddd" stroke-width="2.500"/></svg></button><i class="slash"></i>
</nav>

<div class="canvas">
  <p class="vp">[−][Custom View][X-Ray]</p>
  <div class="vpwin">
    <button title="Minimize"><svg class="i14" viewBox="0 0 14 14"><path d="M0 9h14v3H0z" fill="#eee"/></svg></button>
    <button title="Restore"><svg class="i14" viewBox="0 0 14 14"><path d="M4 1h9v9" fill="none" stroke="#ccc" stroke-width="2"/><path d="M2 5h7v7H2z" fill="none" stroke="#eee" stroke-width="3"/></svg></button>
    <button title="Close"><svg class="i14" viewBox="0 0 14 14"><path d="M2 2l9 10M11 2L2 12" stroke="#eee" stroke-width="3"/></svg></button>
  </div>

  <svg class="cube" viewBox="60 40 420 350" role="img" aria-label="View cube">
    <ellipse cx="276" cy="250" rx="170" ry="102" fill="none" stroke="#444a54" stroke-width="37"/>
    <text x="145" y="197" text-anchor="middle" class="compass" transform="rotate(-30 145 180)">E</text>
    <text x="374" y="176" text-anchor="middle" class="compass" transform="rotate(-30 374 160)">S</text>
    <text x="158" y="349" text-anchor="middle" class="compass" transform="rotate(25 158 332)">N</text>
    <text x="428" y="321" text-anchor="middle" class="compass" transform="rotate(25 428 304)">W</text>
    <path d="M262 58l118 39-86 61-122-43z" fill="#b1b3b6"/>
    <path d="M172 115l122 43-2 129-114-52z" fill="#a2a4a7"/>
    <path d="M380 97l-8 120-80 70 2-129z" fill="#8f9194"/>
    <path d="M272 143l20-7 16 8 0 30-14 8-22-8z" fill="#8f98aa" opacity=".7"/>
    <path d="M172 115l122 43 86-61M294 158l-2 129" fill="none" stroke="#444a52" stroke-width="2" stroke-dasharray="18 8"/>
    <text x="233" y="211" text-anchor="middle" class="face" transform="rotate(14 233 200)">BACK</text>
    <text x="337" y="200" text-anchor="middle" class="face" transform="rotate(-30 337 190)">LEFT</text>
    <text x="276" y="115" text-anchor="middle" class="face" transform="rotate(192 276 105)">TOP</text>
  </svg>
  <button class="wcs">WCS<svg viewBox="0 0 12 8" class="wtri"><path d="M1 1h10L6 6z" fill="none" stroke="#b9bcc8"/></svg></button>

  <div class="navbar" role="toolbar" aria-label="Navigation">
    <svg viewBox="0 0 120 777" class="navart">
      <g fill="none" stroke="#454b57" stroke-width="4" stroke-linejoin="round">
        <circle cx="98" cy="18" r="14" fill="#474b51" stroke="none"/><path d="M92 12l12 12M104 12L92 24" stroke="#72767b" stroke-width="3"/>
        <path d="M60 64h40v40a40 40 0 1 1-40-40z" fill="#5b606a"/><circle cx="60" cy="102" r="21" fill="#555a63"/><path d="M44 117l-12 16M76 117l12 16M40 90"/>
        <path d="M50 178h22l-11 9z" fill="#3d434d" stroke="none"/><path d="M10 206h102M10 608h102" stroke="#676c70" stroke-width="2"/>
        <path d="M46 302C36 286 24 276 18 268c2-8 10-4 22 4l-8-34c4-8 12-4 18 26l4-40c8-8 14 0 14 36l10-34c8-6 12 2 4 40l12-22c10-2 8 10 2 28-4 18-8 24-16 32z" fill="#5b606a"/>
        <path d="M18 328l54 52M72 328l-54 52M16 340v-14h14M60 326h14v14M30 382H16v-14"/><circle cx="75" cy="380" r="18" fill="#5b606a"/><path d="M88 392l14 14" stroke-width="9"/>
        <path d="M50 438h22l-11 9z" fill="#3d434d" stroke="none"/>
        <ellipse cx="58" cy="512" rx="42" ry="15"/><path d="M50 546v-62h-8l16-20 14 20h-6v62z" fill="#5b606a"/><path d="M26 526l16-12v24z" fill="#454b57"/>
        <path d="M50 579h22l-11 9z" fill="#3d434d" stroke="none"/>
        <path d="M17 622h24v24H17zM47 622h24v24H47zM77 622h24v24H77zM17 656h60v50H17z"/><path d="M34 668l24 13-24 13z" fill="#454b57"/>
        <circle cx="98" cy="756" r="14" fill="#474b51" stroke="none"/><path d="M90 750h16M92 756h12l-6 6z" stroke="#72767b" stroke-width="2"/>
      </g>
    </svg>
  </div>

  <form class="dialog" role="dialog" aria-labelledby="dlg-title">
    <div class="dlg-bar">
      <svg class="i20" viewBox="0 0 20 20"><path d="M0 2l3-2v15l-3-1z" fill="#ee6b8e"/><path d="M2 0h16v15H2z" fill="#e31650"/><path d="M2 14h16v6H2z" fill="#7c0a2a"/><text x="10" y="11" text-anchor="middle" class="mini-a">A</text><text x="10" y="19" text-anchor="middle" class="mini-cad">CAD</text></svg>
      <h3 id="dlg-title">Array</h3>
      <button type="button" title="Close"><svg class="i14" viewBox="0 0 14 14"><path d="M1 1l12 12M13 1L1 13" stroke="#222" stroke-width="1.200"/></svg></button>
    </div>
    <div class="dlg-body">
      <div class="left">
        <div class="kinds">
          <label><input type="radio" name="kind">Rectangular Array</label>
          <label><input type="radio" name="kind" checked>Polar Array</label>
        </div>
        <div class="frame">
          <div class="center">
            <span class="cp">Center point:</span>
            <label for="cx">X:</label><input type="text" id="cx" value="0.500">
            <label for="cy" class="y">Y:</label><input type="text" id="cy" value="0.289">
            <button type="button" class="pick" title="Pick center point"><svg class="i20"><use href="#pick"/></svg></button>
          </div>
          <fieldset>
            <legend>Method and values</legend>
            <label for="method" class="mlabel">Method:</label>
            <div class="msel"><select id="method"><option>Total number of items &amp; Angle to fill</option></select><svg viewBox="0 0 10 6" class="chev"><path d="M1 1l4 4 4-4" fill="none" stroke="#444"/></svg></div>
            <div class="vals">
              <label for="total">Total number of items:</label><input type="text" id="total" class="focus" value="3"><i></i>
              <label for="fill">Angle to fill:</label><input type="text" id="fill" value="360"><button type="button" class="pick" title="Pick angle"><svg class="i20"><use href="#pick"/></svg></button>
              <label for="between">Angle between items:</label><input type="text" id="between" value="90" disabled><button type="button" class="pick" disabled title="Pick angle"><svg class="i20"><use href="#pick"/></svg></button>
            </div>
            <div class="tip">
              <div class="tipmark"><svg viewBox="0 0 24 36" class="lamp"><path d="M12 1c9 0 12 8 9 14-2 4-4 5-4 9H7c0-4-2-5-4-9C0 9 3 1 12 1z" fill="#f1e373" stroke="#9c8a1b" stroke-width="1.500"/><path d="M12 4c6 0 8 6 6 10-2 3-3 5-3 8H9c0-3-1-5-3-8C4 10 6 4 12 4z" fill="#fdfbe0"/><path d="M9 5h6l-1 12h-4zM10 18h4v4h-4z" fill="#234d7c"/><path d="M7 25h10v3H7zM7 29h10v3H7z" fill="#aeb0d8" stroke="#6d6d7a" stroke-width=".5"/><path d="M14 25h3v7h-3z" fill="#d8ca50"/><path d="M8 32h8l-2 3h-4z" fill="#223"/></svg>Tip</div>
              <p>For angle to fill, a positive value specifies<br>counterclockwise rotation.&nbsp; A negative value<br>specifies clockwise rotation.</p>
            </div>
          </fieldset>
          <div class="foot">
            <label><input type="checkbox" checked>Rotate items as copied</label>
            <button type="button" class="more"><span>M<u>o</u>re</span><svg viewBox="0 0 8 9" class="dbl"><path d="M1 0l3 3 3-3M1 5l3 3 3-3" fill="none" stroke="#000" stroke-width="1.500"/></svg></button>
          </div>
        </div>
      </div>
      <div class="right">
        <div class="selobj">
          <button type="button" class="pick" aria-labelledby="so"><svg viewBox="0 0 22 20" class="selart"><path d="M1 1h15v12H1z" fill="#57c17f" stroke="#259a53" stroke-dasharray="2 1"/><path d="M13 9v10l2-2 2 4 2-1-2-4h3z" fill="#fff" stroke="#333"/></svg></button>
          <span id="so">Select objects</span>
        </div>
        <p class="count">1 objects selected</p>
        <svg class="preview" viewBox="0 0 187 187" role="img" aria-label="Array preview"><g fill="none" shape-rendering="crispEdges"><circle cx="93" cy="94" r="48" stroke="#bbb"/><path d="M40.500 65.500h22v10h-22zM112.500 41.500h10v22h-10zM64.500 125.500h10v22h-10z" stroke="#777"/><path d="M124.500 113.500h22v10h-22zM90 94.500h7M93.500 91v7" stroke="#000"/></g></svg>
        <div class="acts">
          <button type="button" class="ok">OK</button>
          <button type="button">Cancel</button>
          <button type="button">Preview &lt;</button>
          <button type="button">Help</button>
        </div>
      </div>
    </div>
  </form>

  <div class="command">
    <div class="grip">
      <svg viewBox="0 0 22 7" class="dots"><path d="M0 1h22M0 6h22" stroke="#ddd" stroke-width="2" stroke-dasharray="2 2"/></svg>
      <button title="Close"><svg class="i14" viewBox="0 0 14 14"><path d="M2 2l10 10M12 2L2 12" stroke="#ddd" stroke-width="2.500"/></svg></button>
      <button title="Customize"><svg class="i20" viewBox="0 0 20 20"><path d="M2 18L12 8" stroke="#ddd" stroke-width="4" stroke-linecap="round"/><path d="M11 9c-2-5 1-8 5-8l-3 4 2 2 4-3c1 4-2 8-8 5z" fill="#ddd"/></svg></button>
    </div>
    <div class="log">
      <pre>Command:
Command: ARRAYCLASSIC
Select objects: 1 found
Select objects:</pre>
      <div class="entry">
        <button title="Recent commands"><svg viewBox="0 0 20 16" class="term"><path d="M0 0h20v16H0z" fill="#e8e8e8" stroke="#777"/><path d="M0 0h20v4H0z" fill="#6d6d6d"/><path d="M2 6l3 2-3 3M6 12h5" fill="none" stroke="#555"/></svg><i class="dn wide"></i></button>
        <label for="cmd"><b>ARRAYCLASSIC</b><span>Specify center point of array:</span></label>
        <input type="text" id="cmd">
        <i class="up"></i>
      </div>
    </div>
  </div>
</div>

<nav class="layouts" aria-label="Layouts">
  <a href="#model" class="cur"><b>Model</b></a><a href="#a3">a3</a><i class="slash"></i>
  <button title="New layout"><svg class="i16" viewBox="0 0 16 16"><path d="M8 0v16M0 8h16" stroke="#ddd" stroke-width="2.500"/></svg></button><i class="slash"></i>
</nav>

<footer class="status">
  <div class="fill"></div>
  <div class="g"><button class="model">MODEL</button></div>
  <div class="g"><button title="Grid"><svg class="i20"><use href="#s-grid"/></svg></button><button title="Snap"><svg class="i20"><use href="#s-dots"/></svg></button><button class="arr" title="Snap options"><i class="dn wide"></i></button></div>
  <div class="g"><button title="Ortho"><svg class="i20"><use href="#s-ortho"/></svg></button><button title="Polar"><svg class="i20"><use href="#s-polar"/></svg></button><button class="arr" title="Polar options"><i class="dn wide"></i></button><button title="Isodraft"><svg class="i20"><use href="#s-iso"/></svg></button><button class="arr" title="Isodraft options"><i class="dn wide"></i></button></div>
  <div class="g"><button title="Tracking"><svg class="i20"><use href="#s-angle"/></svg></button><button class="sel" title="Object snap"><svg class="i20"><use href="#s-osnap"/></svg></button><button class="arr" title="Snap list"><i class="dn wide"></i></button></div>
  <div class="g"><button class="sel" title="Annotation visibility"><svg class="i20" viewBox="0 0 20 20"><use href="#s-ann" x="-2"/><circle cx="16" cy="4" r="3" fill="none" stroke="#cfe3f7" stroke-width="1.300"/></svg></button><button title="Auto scale"><svg class="i20" viewBox="0 0 20 20"><use href="#s-ann" x="-2"/><path d="M18 0l-5 6h2l-1 4 6-6h-3z" fill="currentColor"/></svg></button><button title="Annotation scale"><svg class="i20"><use href="#s-ann"/></svg></button><button class="ratio">1:1<i class="dn wide"></i></button></div>
  <div class="g"><button title="Workspace"><svg class="i20"><use href="#s-gear"/></svg></button><button class="arr" title="Workspaces"><i class="dn wide"></i></button></div>
  <div class="g"><button title="Monitor"><svg class="i20"><use href="#s-plus"/></svg></button></div>
  <div class="g"><button title="Isolate objects"><svg class="i20"><use href="#s-iso2"/></svg></button></div>
  <div class="g"><button class="w34" title="Standards"><svg class="i24"><use href="#s-globe"/></svg></button><button class="w34" title="History"><svg class="i24"><use href="#s-hist"/></svg></button></div>
  <div class="g"><button title="Clean screen"><svg class="i20"><use href="#s-full"/></svg></button><button title="Customization"><svg class="i20"><use href="#s-menu"/></svg></button></div>
</footer>
</body>
</html>
```
FILE: styles.css
```css
* { box-sizing: border-box; margin: 0; }

:root {
  --bg: #222933;
  --panel: #3b4453;
  --tools: #3c4252;
  --muted: #6f7581;
  --icon: #7a7e88;
}

body {
  min-height: 100vh;
  display: flex;
  flex-direction: column;
  background: var(--bg);
  color: #f0f0f0;
  font: 14px/20px "Open Sans", "Noto Sans", sans-serif;
  border-top: 1px solid #0c93dd;
  overflow-x: hidden;
}

button, input, select { font: inherit; color: inherit; }
button { background: none; border: 0; padding: 0; display: flex; align-items: center; justify-content: center; }
a { color: inherit; text-decoration: none; }
svg { display: block; flex: none; }
i { flex: none; }

.sprite { position: absolute; width: 0; height: 0; }
.i10 { width: 10px; height: 10px; }
.i14 { width: 14px; height: 14px; overflow: visible; }
.i16 { width: 16px; height: 16px; }
.i20 { width: 20px; height: 20px; }
.i24 { width: 24px; height: 24px; }
.i40 { width: 40px; height: 40px; }
.open { overflow: visible; }

.dn, .up, .rt { display: block; width: 0; height: 0; border: 3px solid transparent; }
.dn { border-top: 4px solid #c8cbd0; border-bottom: 0; }
.dn.wide { border-width: 5px 5px 0; border-top-color: #e0e0e0; }
.up { border-bottom: 4px solid #444; border-top: 0; }
.rt { border-width: 5px 0 5px 5px; border-left-color: #ddd; }

/* title bar */
.titlebar { display: flex; align-items: center; height: 38px; padding: 0 3px 4px 2px; }
.quick { display: flex; align-items: center; gap: 10px; }
.quick button { height: 28px; }
.logo { width: 50px; height: 22px; margin-right: 1px; }
.logo-a { font: bold 14px "Open Sans", sans-serif; fill: #fff; }
.logo-cad { font: bold 9px "Open Sans", sans-serif; fill: #fff; }
.lit { color: #d8d8d8; }
.dim { color: #5b616b; }
.dim .dn { border-top-color: #8a8f97; }
.drop { width: 6px; }
.quick .drop { margin: 0 0 0 -2px; }
.more-qa { width: 14px; flex-direction: column; }
.more-qa::before { content: ""; width: 10px; height: 2px; margin-bottom: 3px; background: #ddd; }
.quick .share { gap: 6px; margin-left: -2px; color: #8fc8f4; }
.titlebar h1 { flex: 1; display: flex; justify-content: center; gap: 18px; font-size: 14px; font-weight: 400; }
.account { display: flex; align-items: center; }
.find { width: 223px; height: 26px; margin: 0 6px 0 8px; padding: 0 4px; border: 0; background: #454e60; font-style: italic; }
.find::placeholder { color: #b9bdc5; opacity: 1; }
.who { margin: 0 14px 0 9px; }
.who span { width: 114px; padding-left: 7px; text-align: left; }
.app { gap: 9px; padding: 0 13px 0 8px; border-right: 1px solid #4a5160; height: 22px; }
.help { gap: 10px; margin: 0 77px 0 11px; }
.help b { width: 20px; height: 20px; border-radius: 10px; background: #ddd; color: #222933; }
.win { width: 31px; height: 20px; }

/* ribbon tabs */
.tabs { display: flex; gap: 1px; height: 25px; padding-left: 6px; color: #b9bcc2; }
.tabs a { padding: 3px 12px 0; }
.tabs .on { background: var(--panel); color: #fff; }
.minrib { gap: 6px; margin-left: 25px; }
.minrib span { width: 19px; height: 9px; background: #b9bcc2; display: flex; align-items: center; justify-content: center; }

/* ribbon */
.ribbon {
  display: grid;
  grid-template-columns: 278fr 316fr 184fr 341fr 100fr 277fr 85fr 121fr 113fr 95fr;
  height: 124px;
  margin: 0 4px 0 3px;
  background: var(--panel);
}
.panel { display: flex; flex-direction: column; min-width: 0; border-right: 1px solid var(--bg); }
.panel:last-child { border-right: 0; }
.tools { display: grid; height: 98px; padding-top: 5px; color: var(--muted); background: linear-gradient(var(--tools), var(--tools)) 3px 2px / calc(100% - 8px) 94px no-repeat; }
.tools svg { color: var(--icon); }
.panel h2 { flex: 1; display: flex; align-items: center; justify-content: center; gap: 7px; font-size: 14px; font-weight: 400; color: #f4f4f4; padding-top: 2px; position: relative; }
.panel h2.start { justify-content: flex-start; padding-left: 6px; }
.panel h2.with-launch { padding-right: 15px; }
.launch { width: 8px; height: 8px; }
.start .launch { margin-left: 5px; }
.launch.end { position: absolute; right: 5px; top: 9px; }

.draw { grid-template-columns: 53px 55px 66px 48px 1fr; }
.modify { grid-template-columns: 91px 88px 95px 1fr; }
.annot { grid-template-columns: 59px 71px 1fr; }
.layers { grid-template-columns: 77px 1fr; }
.block { grid-template-columns: 52px 1fr; }
.props { grid-template-columns: 79px 1fr; }
.groups { grid-template-columns: 50px 1fr; }
.utils { grid-template-columns: 88px 1fr; }
.clipb { grid-template-columns: 66px 1fr; }
.viewp { grid-template-columns: 78px 1fr; }

.big { display: flex; flex-direction: column; justify-content: flex-start; padding-top: 3px; line-height: 20px; white-space: nowrap; min-width: 0; }
.big svg { margin-bottom: 5px; }
.big .dn { margin-top: 4px; }
.glyph-a { font: bold 44px "Liberation Sans", sans-serif; fill: var(--icon); }

.col { display: grid; grid-auto-rows: 31px; padding-left: 7px; }
.col button { justify-content: flex-start; gap: 7px; white-space: nowrap; }
.col .dn { margin-left: 3px; }
.modify .col button { gap: 6px; }
.lists span { width: 38px; text-align: left; }
.lists .dn { margin-left: 2px; }
.block .col, .utils .col { padding-left: 3px; }
.groups .col { padding-left: 0; }
.groups .col button { width: 30px; justify-content: center; }
.groups .picked { height: 28px; margin-top: 1px; background: #44597a; border: 1px solid #5f9fd8; }
.clipb .col { padding-left: 3px; }

.rows { display: grid; grid-auto-rows: 31px; align-items: center; min-width: 0; }
.combo { display: flex; align-items: center; gap: 4px; height: 28px; margin-right: 3px; padding: 0 2px 0 4px; background: #4a5467; border: 1px solid #2b323e; flex: 1; min-width: 0; }
.combo select { flex: 1; min-width: 0; appearance: none; background: none; border: 0; padding: 0; color: #868c97; }
.layers .combo { background: #475367; }
.combo.flat { background: #3f4757; border-color: #353c49; }
.flat .dn.wide { border-top-color: #6c727d; }
.swatch { width: 18px; height: 18px; background: #a5aa32; outline: 1px solid #8b8f98; margin: 0 2px 0 1px; }
.swatch.dull { background: #6c703e; outline-color: #666c77; margin-left: 4px; }
.rule { width: 80px; height: 1px; margin: 0 -1px 0 4px; background: #b4b9c1; }
.strip { display: flex; gap: 10px; padding-left: 4px; }
.prop { display: flex; align-items: center; gap: 3px; }

/* drawing and layout tabs */
.files, .layouts { display: flex; align-items: stretch; height: 33px; padding-left: 14px; }
.files { padding-top: 3px; }
.slash { width: 10px; height: 20px; align-self: center; background: linear-gradient(112deg, transparent 46%, #59606d 46%, #59606d 54%, transparent 54%); }
.files a, .layouts a { display: flex; align-items: center; padding: 0 9px; }
.files a { padding-top: 1px; }
.files .cur { gap: 11px; padding: 1px 14px 0 21px; background: var(--panel); clip-path: polygon(11px 0, 100% 0, calc(100% - 11px) 100%, 0 100%); }
.files button { padding: 0 12px 0 11px; }
.layouts { height: 30px; padding-left: 12px; }
.layouts .cur { padding: 0 22px; background: var(--panel); clip-path: polygon(12px 0, 100% 0, calc(100% - 12px) 100%, 0 100%); }
.layouts a + a { padding: 0 11px 0 8px; }
.layouts button { padding: 0 12px; }

/* drawing area */
.canvas { position: relative; flex: 1; min-height: 715px; margin: 0 3px 0 2px; border: solid var(--panel); border-width: 5px 0; }
.vp { padding: 5px; font-size: 15px; }
.vpwin { position: absolute; right: 10px; top: 9px; display: flex; gap: 11px; }
.cube { position: absolute; right: 14px; top: 67px; width: 140px; height: 117px; }
.compass { font: bold 46px "Open Sans", sans-serif; fill: #a9adb2; }
.face { font: bold 27px "Open Sans", sans-serif; fill: #3d434c; }
.wcs { position: absolute; right: 55px; top: 198px; width: 56px; height: 21px; gap: 5px; border-radius: 5px; background: #9a9caa; border: 1px solid #8b8e9b; font: bold 12px "Open Sans", sans-serif; color: #6e717c; }
.wtri { width: 12px; height: 8px; }
.navbar { position: absolute; right: 3px; top: 250px; width: 40px; height: 259px; border-radius: 4px; background: #5e6264; outline: 1px solid #1b2028; }
.navart { width: 40px; height: 259px; }

/* array dialog */
.dialog { position: absolute; left: 50%; top: 52px; width: 648px; margin-left: -324px; border-radius: 8px; background: #f0f0f0; color: #000; font: 13px/16px "Liberation Sans", Arial, sans-serif; overflow: hidden; box-shadow: 0 0 0 1px #3a4049, 0 8px 24px #0006; }
.dlg-bar { display: flex; align-items: center; gap: 5px; height: 37px; padding: 0 14px 2px 10px; background: #eef3f8; }
.dlg-bar h3 { flex: 1; font: 15px/20px "Open Sans", sans-serif; }
.mini-a { font: bold 11px "Open Sans", sans-serif; fill: #fff; }
.mini-cad { font: bold 5px "Open Sans", sans-serif; fill: #fff; }
.dlg-body { display: flex; justify-content: space-between; padding: 0 16px 17px 10px; }
.left { width: 417px; }
.kinds { display: flex; padding-top: 14px; }
.kinds label { display: flex; flex: none; align-items: center; gap: 3px; width: 222px; height: 17px; white-space: nowrap; }
.dialog input[type="radio"], .dialog input[type="checkbox"] { appearance: none; flex: none; width: 16px; height: 16px; margin: 0; border: 1px solid #666; border-radius: 8px; background: #f6f6f6; }
.dialog input[type="radio"]:checked { border: 5px solid #0a60c0; background: #fff; }
.dialog input[type="checkbox"] { border: 0; border-radius: 3px; background: #0a60c0; display: grid; place-items: center; }
.dialog input[type="checkbox"]::after { content: ""; width: 8px; height: 4px; margin-bottom: 3px; border: solid #fff; border-width: 0 0 1px 1px; transform: rotate(-45deg); }
.frame { margin-top: 14px; padding: 13px 16px 8px 17px; border: 1px solid #dadada; border-top: 0; }
.center { display: flex; line-height: 23px; }
.cp { width: 112px; }
.center label { width: 21px; }
.center label.y { width: 25px; margin-left: 13px; }
.dialog input[type="text"] { width: 78px; height: 23px; padding: 0 2px 2px; border: 1px solid #e6e6e6; border-bottom-color: #777; background: #fff; outline: 0; }
.pick { width: 30px; height: 30px; border: 1px solid #cfcfcf; border-radius: 4px; background: #fdfdfd; }
.center .pick { margin-left: 8px; }
.pick:disabled { --plus: #bbb; --cur: #aaa; border-color: #e4e4e4; background: #f6f6f6; }
fieldset { margin: 2px 0 0; padding: 10px 0 13px; border: 1px solid #dadada; min-width: 0; }
legend { margin-left: 6px; padding: 0 2px; }
.mlabel { display: block; padding-left: 19px; }
.msel { display: flex; align-items: center; width: 352px; height: 24px; margin: 4px 0 13px 11px; padding: 0 5px 0 4px; background: #fff; border: 1px solid #ccc; border-bottom-color: #aaa; border-radius: 2px; }
.msel select { flex: 1; appearance: none; border: 0; background: none; padding: 0; }
.chev { width: 10px; height: 6px; }
.vals { display: grid; grid-template-columns: 208px 89px 30px; grid-auto-rows: 30px; padding-left: 19px; }
.vals label { line-height: 18px; }
.dialog .vals .focus { width: 80px; height: 24px; border-bottom: 2px solid #0a67c8; }
.dialog .vals input:disabled { background: #f0f0f0; color: #777; border-color: #e2e2e2; }
.tip { display: flex; gap: 24px; padding: 7px 0 0 19px; }
.tipmark { width: 24px; text-align: center; }
.lamp { width: 24px; height: 36px; margin-bottom: 6px; }
.tip p { padding-top: 2px; white-space: nowrap; }
.foot { display: flex; justify-content: space-between; align-items: flex-end; margin-top: 14px; }
.foot label { display: flex; align-items: center; gap: 3px; }
.more { width: 114px; height: 28px; gap: 11px; padding-bottom: 3px; background: #f0f0f0; border: solid; border-width: 1px 2px 2px 1px; border-color: #fff #6b6b6b #6b6b6b #fff; }
.dbl { width: 8px; height: 9px; }
.right { width: 191px; padding-top: 7px; }
.selobj { display: flex; gap: 13px; padding-left: 18px; line-height: 24px; }
.selobj .pick { width: 32px; }
.selart { width: 22px; height: 20px; overflow: visible; }
.count { margin-top: 7px; padding-left: 2px; }
.preview { width: 189px; height: 189px; margin: 14px 0 18px 2px; border: 1px solid #000; background: #fff; box-shadow: -2px 2px 0 #000; }
.acts { display: grid; justify-content: end; gap: 6px; padding-right: 1px; }
.acts button { width: 112px; height: 26px; border: 1px solid #cdcdcd; border-bottom-color: #b8b8b8; border-radius: 4px; background: #fdfdfd; }
.acts .ok { border-color: #0a67c8; }

/* command window */
.command { position: absolute; left: 397px; right: 399px; bottom: 1px; height: 122px; display: flex; font: 15px/19px "Liberation Mono", monospace; color: #111; }
.grip { width: 31px; padding: 6px 5px; background: #2d3340; display: flex; flex-direction: column; border-radius: 4px 0 0 4px; }
.dots { width: 22px; height: 7px; margin-bottom: 8px; }
.grip button { justify-content: flex-start; margin-bottom: 13px; }
.log { flex: 1; min-width: 0; display: flex; flex-direction: column; margin-top: 1px; background: #c8c8c8; border-radius: 0 2px 2px 0; overflow: hidden; }
.log pre { flex: 1; padding: 19px 3px 0; font: inherit; }
.entry { display: flex; align-items: center; height: 26px; padding: 0 6px 0 5px; background: #fff; border-top: 1px solid #222831; border-bottom: 1px solid #c8c8c8; }
.entry button { gap: 3px; margin-right: 6px; }
.entry .dn.wide { border-top-color: #666; }
.entry .up { border-width: 0 5px 5px; border-bottom-color: #555; }
.entry label { white-space: nowrap; padding-top: 1px; }
.entry span { margin-left: 6px; }
.entry input { flex: 1; min-width: 0; border: 0; background: none; outline: 0; }
.term { width: 20px; height: 16px; }

/* status bar */
.status { display: flex; gap: 3px; height: 45px; padding: 7px 4px 6px; border-bottom: 2px solid #1c7fb5; color: #ddd; }
.status > div { background: var(--panel); }
.fill { flex: 1; margin-right: 2px; }
.g { display: flex; }
.g button { width: 30px; height: 30px; }
.g .arr { width: 20px; }
.g .model { width: 57px; color: #fff; }
.g .sel { background: #5f90c4; color: #fff; border: 1px solid var(--panel); }
.g .ratio { width: 42px; gap: 5px; }
.g .w34 { width: 34px; }
```
